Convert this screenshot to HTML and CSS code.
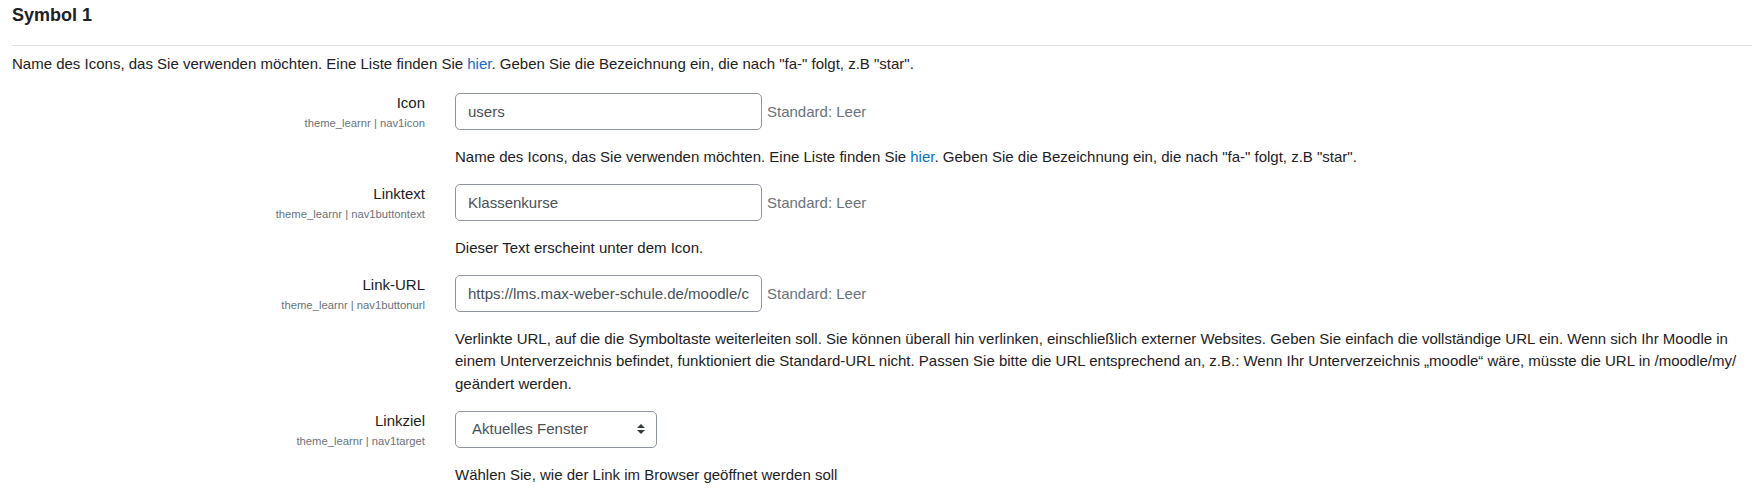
FILE: index.html
```html
<!DOCTYPE html>
<html lang="de">
<head>
<meta charset="utf-8">
<title>Symbol 1</title>
<link rel="stylesheet" href="styles.css">
</head>
<body>
<div class="page">
  <h3 class="section-title">Symbol 1</h3>
  <p class="intro">Name des Icons, das Sie verwenden möchten. Eine Liste finden Sie <a href="#">hier</a>. Geben Sie die Bezeichnung ein, die nach "fa-" folgt, z.B "star".</p>

  <div class="form-item">
    <div class="form-label">
      <label for="nav1icon">Icon</label>
      <span class="form-shortname">theme_learnr | nav1icon</span>
    </div>
    <div class="form-setting">
      <div class="field-line">
        <input id="nav1icon" class="form-control" type="text" value="users">
        <span class="form-defaultinfo">Standard: Leer</span>
      </div>
      <div class="form-description"><p>Name des Icons, das Sie verwenden möchten. Eine Liste finden Sie <a href="#">hier</a>. Geben Sie die Bezeichnung ein, die nach "fa-" folgt, z.B "star".</p></div>
    </div>
  </div>

  <div class="form-item">
    <div class="form-label">
      <label for="nav1buttontext">Linktext</label>
      <span class="form-shortname">theme_learnr | nav1buttontext</span>
    </div>
    <div class="form-setting">
      <div class="field-line">
        <input id="nav1buttontext" class="form-control" type="text" value="Klassenkurse">
        <span class="form-defaultinfo">Standard: Leer</span>
      </div>
      <div class="form-description"><p>Dieser Text erscheint unter dem Icon.</p></div>
    </div>
  </div>

  <div class="form-item">
    <div class="form-label">
      <label for="nav1buttonurl">Link-URL</label>
      <span class="form-shortname">theme_learnr | nav1buttonurl</span>
    </div>
    <div class="form-setting">
      <div class="field-line">
        <input id="nav1buttonurl" class="form-control" type="text" value="https://lms.max-weber-schule.de/moodle/course/index.php">
        <span class="form-defaultinfo">Standard: Leer</span>
      </div>
      <div class="form-description"><p>Verlinkte URL, auf die die Symboltaste weiterleiten soll. Sie können überall hin verlinken, einschließlich externer Websites. Geben Sie einfach die vollständige URL ein. Wenn sich Ihr Moodle in einem Unterverzeichnis befindet, funktioniert die Standard-URL nicht. Passen Sie bitte die URL entsprechend an, z.B.: Wenn Ihr Unterverzeichnis „moodle“ wäre, müsste die URL in /moodle/my/ geändert werden.</p></div>
    </div>
  </div>

  <div class="form-item">
    <div class="form-label">
      <label for="nav1target">Linkziel</label>
      <span class="form-shortname">theme_learnr | nav1target</span>
    </div>
    <div class="form-setting">
      <div class="select-wrap">
        <select id="nav1target" class="custom-select">
          <option selected>Aktuelles Fenster</option>
          <option>Neues Fenster</option>
        </select>
        <svg class="select-arrow" width="8" height="10" viewBox="0 0 4 5" aria-hidden="true"><path d="M2 0L0 2h4zm0 5L0 3h4z" fill="#343a40"/></svg>
      </div>
      <div class="form-description select-desc"><p>Wählen Sie, wie der Link im Browser geöffnet werden soll</p></div>
    </div>
  </div>
</div>
</body>
</html>
```
FILE: styles.css
```css
html, body {
  margin: 0;
  padding: 0;
  background: #ffffff;
}

body {
  font-family: "Liberation Sans", Arial, sans-serif;
  font-size: 15px;
  line-height: 1.5;
  color: #1d2125;
}

a {
  color: #0f6cbf;
  text-decoration: none;
}

.page {
  padding: 0 7px 0 12px;
}

.section-title {
  margin: 0;
  padding: 4px 0 19px;
  font-size: 18px;
  font-weight: 700;
  line-height: 22px;
  border-bottom: 1px solid #dee2e6;
}

.intro {
  margin: 7px 0 17.5px;
}

.form-item {
  display: grid;
  grid-template-columns: 413px 1fr;
  column-gap: 30px;
  padding-right: 15px;
  margin-bottom: 16px;
}

.form-label {
  text-align: right;
  margin-top: -1px;
}

.form-label label {
  display: block;
  line-height: 22.5px;
}

.form-shortname {
  display: block;
  font-size: 11.25px;
  line-height: 16px;
  color: #6a737b;
}

.field-line {
  display: flex;
  align-items: baseline;
  gap: 5px;
}

.form-control {
  box-sizing: border-box;
  width: 307px;
  height: 36.5px;
  padding: 6px 12px;
  border: 1px solid #8f959e;
  border-radius: 5px;
  font-family: inherit;
  font-size: 15px;
  line-height: 1.5;
  color: #495057;
  background: #ffffff;
}

.form-defaultinfo {
  color: #6a737b;
}

.form-description {
  margin-top: 16px;
}

.form-description p {
  margin: 0;
}

.select-wrap {
  position: relative;
  width: 202px;
}

.custom-select {
  box-sizing: border-box;
  display: block;
  width: 202px;
  height: 36.5px;
  padding: 6px 28px 6px 16px;
  border: 1px solid #8f959e;
  border-radius: 5px;
  font-family: inherit;
  font-size: 15px;
  line-height: 1.5;
  color: #495057;
  background: #ffffff;
  -webkit-appearance: none;
  appearance: none;
}

.select-arrow {
  position: absolute;
  right: 12px;
  top: 13px;
  pointer-events: none;
}

.select-desc {
  margin-top: 16.5px;
}
```
